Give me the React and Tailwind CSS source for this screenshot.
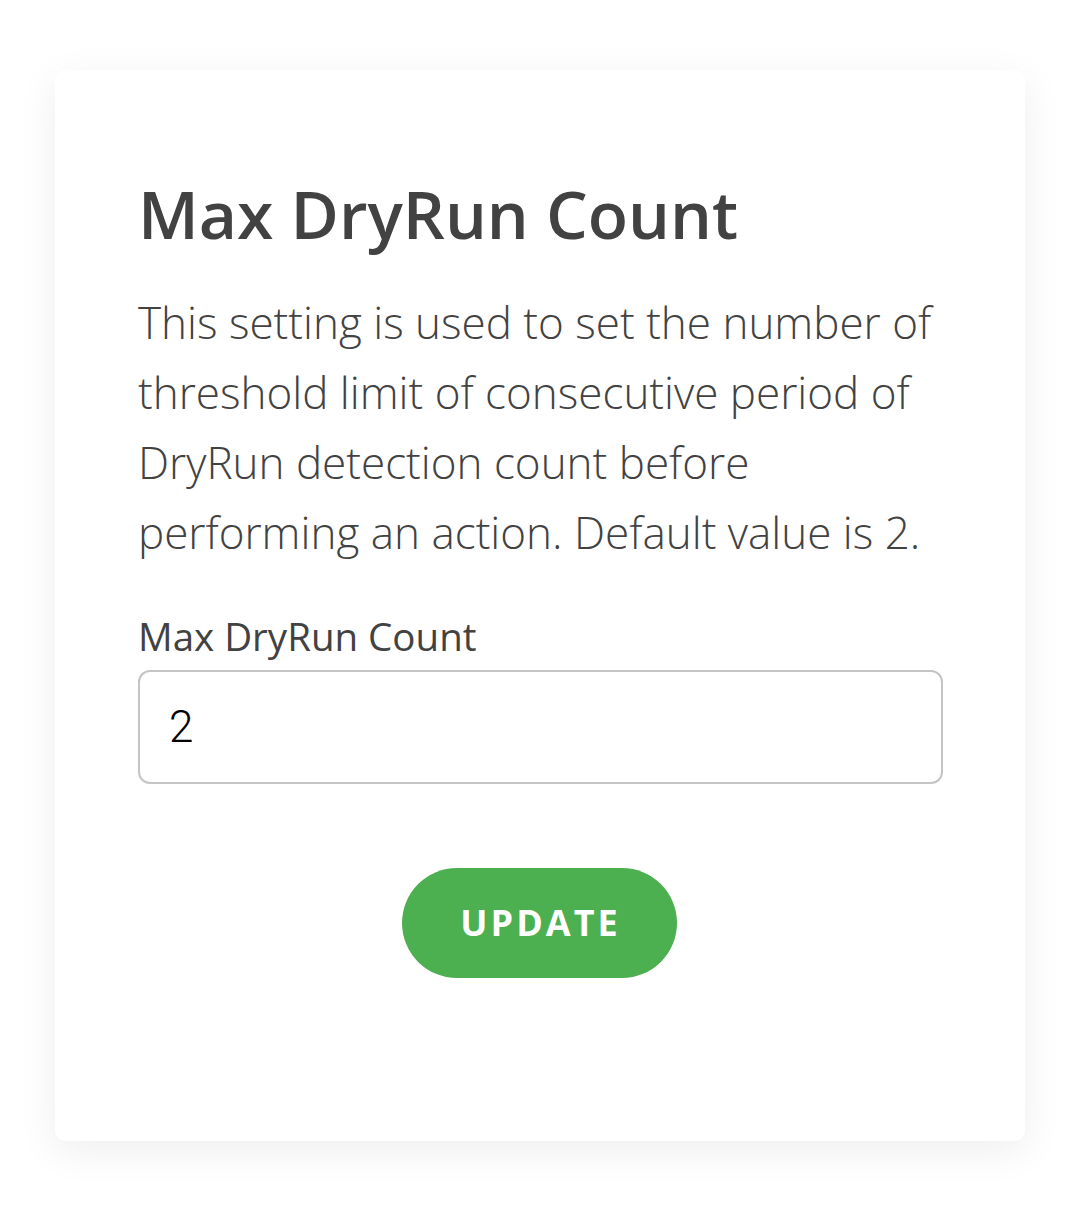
export default function App() {
  return (
    <div className="min-h-[1205px] w-[1080px] bg-white pt-[70px] pl-[55px]" style={{ fontFamily: '"Open Sans", sans-serif' }}>
      <div className="w-[970px] h-[1071px] rounded-[10px] bg-white shadow-[0_10px_40px_rgba(0,0,0,0.07)] pl-[83px] pr-[82px] pt-[103px]">
        <h1 className="text-[66px] leading-[80px] font-semibold text-[#424242]">Max DryRun Count</h1>
        <p className="mt-[34px] text-[44px] leading-[70px] font-light text-[#424242]">
          This setting is used to set the number of threshold limit of consecutive period of DryRun detection count before performing an action. Default value is 2.
        </p>
        <label className="block mt-[44px] text-[38.5px] leading-[50px] text-[#424242]">Max DryRun Count</label>
        <div className="mt-[9px] w-[805px] h-[114px] rounded-[12px] border-2 border-[#c4c4c4] flex items-center pl-[29px]">
          <span className="text-[44px] font-light text-black" style={{ fontFamily: 'Roboto, sans-serif' }}>2</span>
        </div>
        <div className="flex justify-center mt-[84px] pr-[3px]">
          <button className="w-[275px] h-[110px] rounded-full bg-[#4caf50] text-white text-[36px] font-bold tracking-[3px] pl-[3px]">UPDATE</button>
        </div>
      </div>
    </div>
  );
}
